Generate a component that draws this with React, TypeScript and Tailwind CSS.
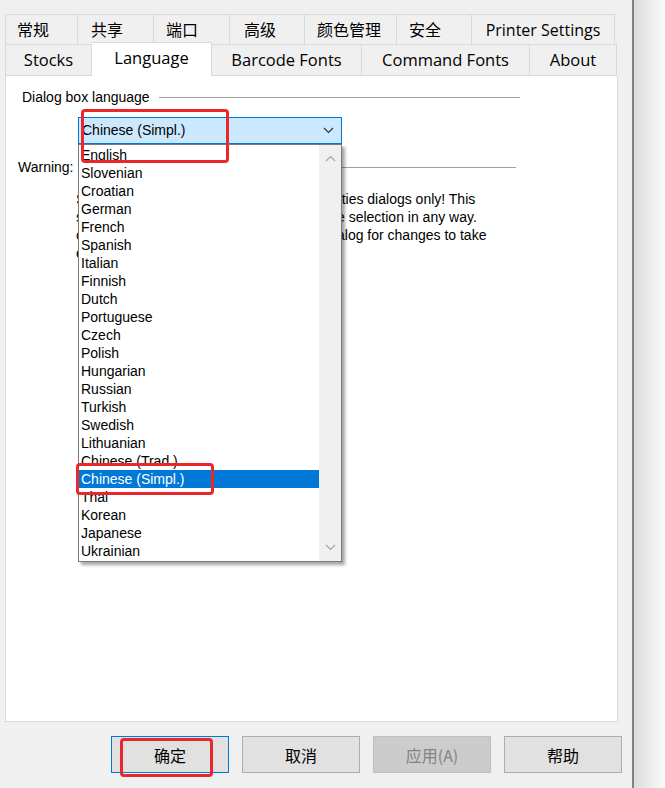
const tabsTop = [
  { label: "常规", cls: "w-[73px] pl-[11px]" },
  { label: "共享", cls: "w-[76px] pl-[13px]" },
  { label: "端口", cls: "w-[76px] pl-[12px]" },
  { label: "高级", cls: "w-[75px] pl-[14px]" },
  { label: "颜色管理", cls: "w-[92px] pl-[12px]" },
  { label: "安全", cls: "w-[75px] pl-[12px]" },
  { label: "Printer Settings", cls: "w-[143px] justify-center" },
];

const tabsBottom = [
  { label: "Stocks", cls: "w-[87px]" },
  { label: "Language", cls: "w-[120px]", active: true },
  { label: "Barcode Fonts", cls: "w-[150px]" },
  { label: "Command Fonts", cls: "w-[168px]" },
  { label: "About", cls: "w-[87px]" },
];

const languages = [
  "English",
  "Slovenian",
  "Croatian",
  "German",
  "French",
  "Spanish",
  "Italian",
  "Finnish",
  "Dutch",
  "Portuguese",
  "Czech",
  "Polish",
  "Hungarian",
  "Russian",
  "Turkish",
  "Swedish",
  "Lithuanian",
  "Chinese (Trad.)",
  "Chinese (Simpl.)",
  "Thai",
  "Korean",
  "Japanese",
  "Ukrainian",
];

// the start of each line sits under the open list; only a sliver shows
const warningLines = [
  { hidden: "S", shown: "rties dialogs only! This" },
  { hidden: "s", shown: "e selection in any way." },
  { hidden: "c", shown: "alog for changes to take" },
  { hidden: "e", shown: "" },
];

const buttons = [
  { label: "确定", cls: "border-[#0078d7] bg-[#e1e1e1] text-black" },
  { label: "取消", cls: "border-[#adadad] bg-[#e1e1e1] text-black" },
  { label: "应用(A)", cls: "border-[#bfbfbf] bg-[#cccccc] text-[#838383]" },
  { label: "帮助", cls: "border-[#adadad] bg-[#e1e1e1] text-black" },
];

function Chevron({ up = false, className = "" }: { up?: boolean; className?: string }) {
  return (
    <svg width="11" height="7" viewBox="0 0 11 7" className={className}>
      <path
        d={up ? "M1 6 L5.5 1.5 L10 6" : "M1 1 L5.5 5.5 L10 1"}
        fill="none"
        stroke="currentColor"
        strokeWidth="1.2"
      />
    </svg>
  );
}

export default function App() {
  return (
    <div className="relative flex h-[788px] w-[665px] overflow-hidden bg-[#f0f0f0] font-['Liberation_Sans',Arial,sans-serif] text-[14px] text-black">
      <div className="flex w-[632px] flex-col pl-[5px] pt-[14px]">
        {/* tab rows */}
        <div className="flex h-[30px] font-['Open_Sans','Noto_Sans_CJK_SC',sans-serif] text-[16px]">
          {tabsTop.map((t, i) => (
            <div
              key={t.label}
              className={`flex items-center border-r border-t border-[#d9d9d9] ${i === 0 ? "border-l" : ""} ${t.cls}`}
            >
              {t.label}
            </div>
          ))}
        </div>
        <div className="flex h-[31px] font-['Open_Sans','Noto_Sans',sans-serif] text-[16.5px]">
          {tabsBottom.map((t, i) =>
            t.active ? (
              <div
                key={t.label}
                className={`relative z-10 -mt-[2px] flex h-[34px] justify-center border-r border-t border-[#d9d9d9] bg-white pt-[3px] ${t.cls}`}
              >
                {t.label}
              </div>
            ) : (
              <div
                key={t.label}
                className={`flex items-center justify-center border-r border-t border-[#d9d9d9] ${i === 0 ? "border-l" : ""} ${t.cls}`}
              >
                {t.label}
              </div>
            ),
          )}
        </div>

        {/* page panel */}
        <div className="flex h-[647px] w-[613px] flex-col border border-[#d9d9d9] bg-white">
          <div className="ml-[16px] mt-[13px] flex w-[498px] items-center leading-[16px]">
            <span>Dialog box language</span>
            <div className="ml-[9px] h-px flex-1 bg-[#a0a0a0]" />
          </div>

          <div className="ml-[72px] mt-[12px] flex h-[27px] w-[264px] items-center justify-between border border-[#0078d7] bg-[#cce8ff] pl-[3px] pr-[7px]">
            <span>Chinese (Simpl.)</span>
            <Chevron className="text-[#333]" />
          </div>

          <div className="ml-[12px] mt-[15px] flex w-[498px] items-center leading-[16px]">
            <span>Warning:</span>
            <div className="ml-[9px] h-px flex-1 bg-[#a0a0a0]" />
          </div>

          <div className="ml-[70px] mt-[15px] flex flex-col leading-[18px]">
            {warningLines.map((l) => (
              <div key={l.hidden + l.shown} className="flex whitespace-nowrap">
                <span className="w-[261px]">{l.hidden}</span>
                <span>{l.shown}</span>
              </div>
            ))}
          </div>
        </div>

        {/* buttons */}
        <div className="mt-[14px] flex justify-end gap-[13px] pr-[10px] font-['Noto_Sans_CJK_SC',sans-serif] text-[16px]">
          {buttons.map((b) => (
            <div
              key={b.label}
              className={`flex h-[37px] w-[118px] items-center justify-center border ${b.cls}`}
            >
              {b.label}
            </div>
          ))}
        </div>
      </div>

      <div className="w-[2px] bg-[#828282]" />
      <div className="flex-1 bg-gradient-to-r from-[#dcdcdc] to-[#fbfbfb]" />

      {/* open dropdown list */}
      <div className="absolute left-[78px] top-[144px] z-20 flex h-[418px] w-[264px] border border-[#7a7a7a] bg-white shadow-[3px_3px_3px_rgba(0,0,0,0.35)]">
        <div className="flex flex-1 flex-col pt-[1px] leading-[18px]">
          {languages.map((l) => (
            <div
              key={l}
              className={`pl-[2px] ${l === "Chinese (Simpl.)" ? "bg-[#0078d7] text-white" : ""}`}
            >
              {l}
            </div>
          ))}
        </div>
        <div className="flex w-[22px] flex-col items-center justify-between bg-[#f0f0f0] py-[10px] text-[#a6a6a6]">
          <Chevron up />
          <Chevron />
        </div>
      </div>

      {/* red annotation boxes */}
      <div className="absolute left-[81px] top-[109px] z-30 h-[54px] w-[148px] rounded-[4px] border-[3px] border-[#e8282b]" />
      <div className="absolute left-[76px] top-[463px] z-30 h-[32px] w-[138px] rounded-[4px] border-[3px] border-[#e8282b]" />
      <div className="absolute left-[120px] top-[738px] z-30 h-[39px] w-[93px] rounded-[4px] border-[3px] border-[#e8282b]" />
    </div>
  );
}
